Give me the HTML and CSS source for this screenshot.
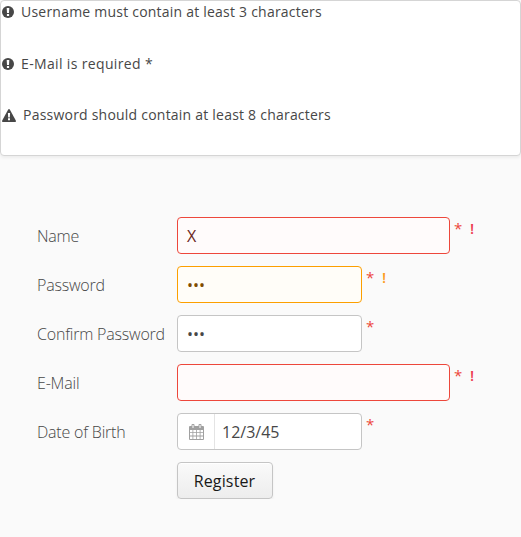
FILE: index.html
```html
<!DOCTYPE html>
<html lang="en">
<head>
<meta charset="utf-8">
<title>Register</title>
<link rel="stylesheet" href="styles.css">
</head>
<body>
<section class="panel">
  <div class="msg"><svg class="icon" viewBox="0 0 12 12"><circle cx="6" cy="6" r="6"/><path class="cut" d="M4.700 2h2.600L7 7H5zM4.900 8h2.200v2H4.900z"/></svg><span>Username must contain at least 3 characters</span></div>
  <div class="msg short"><svg class="icon" viewBox="0 0 12 12"><circle cx="6" cy="6" r="6"/><path class="cut" d="M4.700 2h2.600L7 7H5zM4.900 8h2.200v2H4.900z"/></svg><span>E-Mail is required *</span></div>
  <div class="msg"><svg class="icon wide" viewBox="0 0 14 13"><path d="M6.200.5Q7-.5 7.800.5l6 11Q14.200 13 13 13H1Q-.2 13 .2 11.500z"/><path class="cut" d="M5.900 4h2.200l-.3 4.500H6.200zM6 9.300h2v1.900H6z"/></svg><span>Password should contain at least 8 characters</span></div>
</section>
<form class="form">
  <label class="label">Name</label>
  <div class="cell"><div class="field wide-field error">X</div><span class="req">*</span><span class="mark">!</span></div>
  <label class="label">Password</label>
  <div class="cell"><div class="field caution">•••</div><span class="req">*</span><span class="mark caution-mark">!</span></div>
  <label class="label">Confirm Password</label>
  <div class="cell"><div class="field">•••</div><span class="req">*</span></div>
  <label class="label">E-Mail</label>
  <div class="cell"><div class="field wide-field error"></div><span class="req">*</span><span class="mark">!</span></div>
  <label class="label">Date of Birth</label>
  <div class="cell"><div class="field date"><span class="cal"><svg viewBox="0 0 15 16"><path fill-rule="evenodd" d="M1 2h1.500V1q0-1 1-1h1q1 0 1 1v1h4V1q0-1 1-1h1q1 0 1 1v1H14q1 0 1 1v12q0 1-1 1H1q-1 0-1-1V3q0-1 1-1zM1 6v2.300h2.500V6zm3.300 0v2.300h2.800V6zm3.600 0v2.300h2.800V6zm3.600 0v2.300H14V6zM1 9.100v2.500h2.500V9.100zm3.300 0v2.500h2.800V9.100zm3.600 0v2.500h2.800V9.100zm3.600 0v2.500H14V9.100zM1 12.400V15h2.500v-2.600zm3.300 0V15h2.800v-2.600zm3.600 0V15h2.800v-2.600zm3.600 0V15H14v-2.600zM3.500 1v3h1V1zm7 0v3h1V1z"/></svg></span><span>12/3/45</span></div><span class="req">*</span></div>
  <button class="button" type="button">Register</button>
</form>
</body>
</html>
```
FILE: styles.css
```css
* { box-sizing: border-box; }
body { margin: 0; background: #fafafa; color: #474747; font: 300 16px/24px "Open Sans", sans-serif; }
.panel { height: 156px; background: #fff; border: 1px solid #d5d5d5; border-radius: 4px; box-shadow: 0 2px 3px rgba(0,0,0,.05); font-size: 14px; font-weight: 400; letter-spacing: .22px; }
.msg { display: flex; align-items: center; height: 22px; margin-bottom: 29.500px; padding-left: 1px; }
.short { letter-spacing: .35px; }
.icon { width: 12px; height: 12px; margin-right: 7px; fill: #474747; }
.icon.wide { width: 14px; height: 13px; }
.icon .cut { fill: #fff; }
.form { display: grid; grid-template-columns: 140px 1fr; row-gap: 12px; padding: 61px 0 0 37px; }
.label { height: 37px; line-height: 38px; letter-spacing: -.2px; }
.cell { display: flex; height: 37px; }
.field { width: 185px; height: 37px; padding: 0 9px; background: #fff; border: 1px solid #c5c5c5; border-radius: 4px; font-weight: 400; line-height: 36px; }
.wide-field { width: 273px; }
.error { border-color: #ed473b; background: #fffbfb; color: #6c2621; }
.caution { border-color: #fc9f00; background: #fffdf8; color: #804c00; }
.req, .mark { color: #ed473b; font-weight: 400; font-size: 15px; line-height: 24px; }
.req { margin: -1px 0 0 4px; width: 9px; }
.mark { margin: -1px 0 0 7px; color: #ed3b50; font-weight: 600; }
.caution-mark { color: #fc9c20; }
.date { display: flex; padding: 0; }
.cal { width: 37px; margin-right: 7px; border-right: 1px solid #e4e4e4; display: flex; align-items: center; justify-content: center; }
.cal svg { width: 15px; height: 16px; fill: #a0a0a0; }
.button { grid-column: 2; width: 96px; height: 37px; padding: 0 1px 0 0; border: 1px solid #c5c5c5; border-radius: 4px; background: linear-gradient(#fafafa, #ededed); box-shadow: inset 0 1px 0 #fff, 0 2px 3px rgba(0,0,0,.05); color: #191919; font: 400 16px/24px "Open Sans", sans-serif; letter-spacing: .15px; }
```
